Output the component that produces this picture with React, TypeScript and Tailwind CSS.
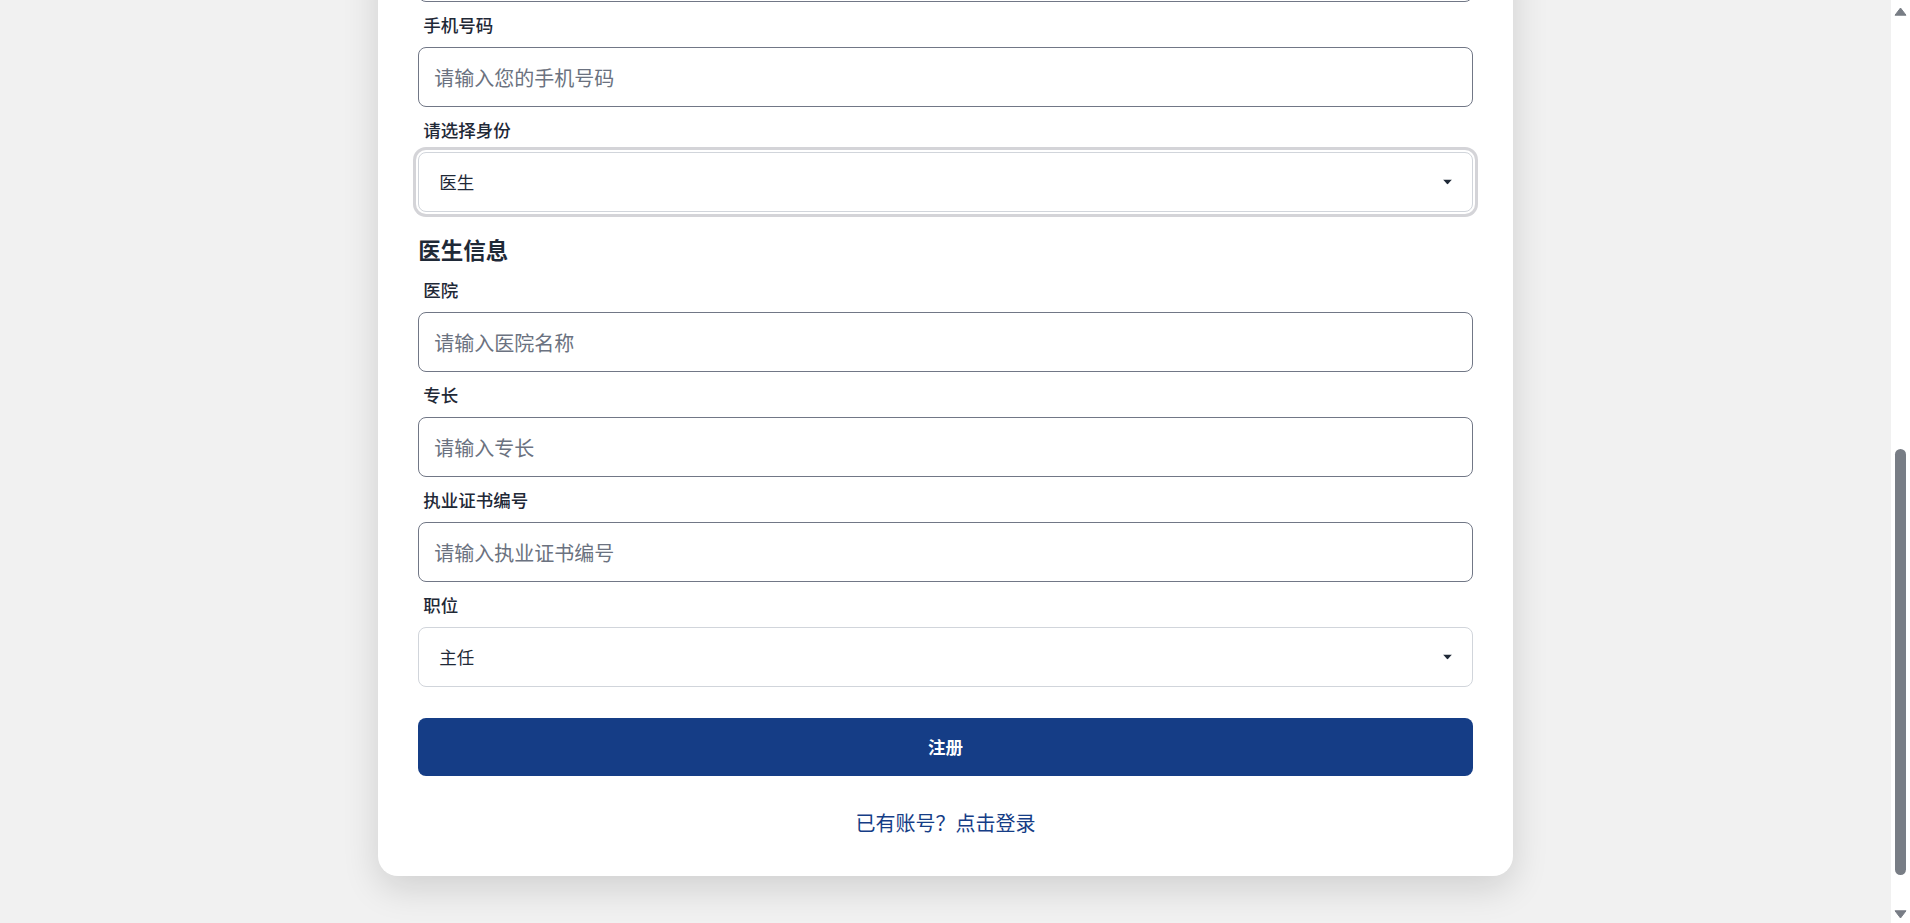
const FONT = "font-['Noto_Sans_CJK_SC','Noto_Sans',sans-serif]"

function Field({ label, placeholder, type = "text" }: { label: string; placeholder: string; type?: string }) {
  return (
    <>
      <label className="ml-[5px] text-[17.5px] leading-[25px] font-medium text-[#1f2937]">{label}</label>
      <input
        type={type}
        placeholder={placeholder}
        className="h-[60px] w-full rounded-[8px] border border-[#717786] bg-white px-[15px] text-[20px] text-[#1f2937] outline-none placeholder:text-[#6b7280]"
      />
    </>
  )
}

function SelectField({ label, value, options, focused }: { label: string; value: string; options: string[]; focused?: boolean }) {
  return (
    <>
      <label className="ml-[5px] text-[17.5px] leading-[25px] font-medium text-[#1f2937]">{label}</label>
      <div className="relative">
        <select
          defaultValue={value}
          className={
            focused
              ? "h-[60px] w-full appearance-none rounded-[8px] border border-[#d1d5db] bg-white px-[20px] text-[17.5px] text-[#1f2937] outline-none ring-[3px] ring-[#d4d4d8] ring-offset-[2px]"
              : "h-[60px] w-full appearance-none rounded-[8px] border border-[#d1d5db] bg-white px-[20px] text-[17.5px] text-[#1f2937] outline-none"
          }
        >
          {options.map((o) => (
            <option key={o}>{o}</option>
          ))}
        </select>
        <svg className="pointer-events-none absolute right-[21px] top-1/2 -translate-y-1/2" width="9" height="5" viewBox="0 0 9 5">
          <path d="M0 0h9L4.5 5z" fill="#1f2937" />
        </svg>
      </div>
    </>
  )
}

function Arrow({ up }: { up?: boolean }) {
  return (
    <svg width="13" height="9" viewBox="0 0 13 9">
      <path
        d={up ? "M6.5 1L12 8.2H1z" : "M1 0.8H12L6.5 8z"}
        fill="#787d85"
        stroke="#787d85"
        strokeWidth="1"
        strokeLinejoin="round"
      />
    </svg>
  )
}

export default function App() {
  return (
    <div className={`flex h-screen overflow-hidden bg-[#f1f1f1] ${FONT}`}>
      {/* Page, scrolled to the end of the form */}
      <main className="flex min-w-0 flex-1 flex-col justify-end pb-[47px]">
        <div className="mx-auto flex w-[60%] shrink-0 flex-col rounded-[20px] bg-white px-[40px] pb-[38px] shadow-[0_12px_36px_rgba(0,0,0,0.14)]">
          <form className="flex flex-col gap-[10px]" onSubmit={(e) => e.preventDefault()}>
            {/* tail of the email field above */}
            <input type="email" className="h-[60px] w-full rounded-[8px] border border-[#717786] bg-white outline-none" />
            <Field label="手机号码" placeholder="请输入您的手机号码" />
            <SelectField label="请选择身份" value="医生" options={["患者", "医生"]} focused />

            <h3 className="mt-[10px] text-[22.5px] leading-[35px] font-bold text-[#1f2937]">医生信息</h3>
            <Field label="医院" placeholder="请输入医院名称" />
            <Field label="专长" placeholder="请输入专长" />
            <Field label="执业证书编号" placeholder="请输入执业证书编号" />
            <SelectField label="职位" value="主任" options={["主任", "副主任", "主治医师", "住院医师"]} />

            <button
              type="submit"
              className="mt-[21px] h-[58px] w-full rounded-[8px] bg-[#153d86] text-[17.5px] font-bold text-white"
            >
              注册
            </button>
          </form>

          <div className="mt-[32px] text-center text-[20px] leading-[30px]">
            <a href="#" className="text-[#153d86]">已有账号？点击登录</a>
          </div>
        </div>
      </main>

      {/* Scrollbar */}
      <aside aria-hidden className="flex w-[19px] shrink-0 flex-col bg-white">
        <div className="flex h-[23px] items-center justify-center">
          <Arrow up />
        </div>
        <div className="flex flex-1 flex-col items-center justify-end pb-[25px]">
          <div className="h-[426px] w-[11px] rounded-full bg-[#787d85]" />
        </div>
        <div className="flex h-[23px] justify-center pt-[10px]">
          <Arrow />
        </div>
      </aside>
    </div>
  )
}
